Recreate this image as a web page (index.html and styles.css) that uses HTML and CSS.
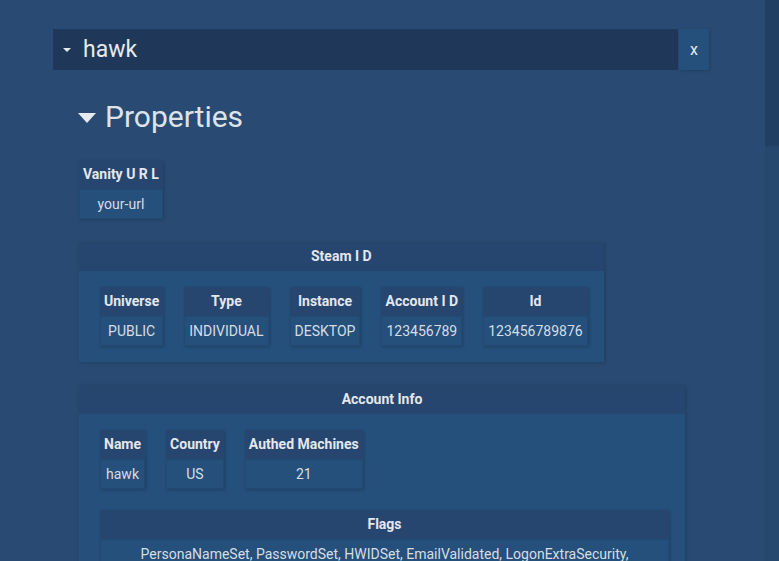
FILE: index.html
```html
<!DOCTYPE html>
<html lang="en">
<head>
<meta charset="utf-8">
<title>hawk</title>
<link rel="stylesheet" href="styles.css">
</head>
<body>
<div class="app">
  <main class="main">
    <div class="window">
      <div class="titlebar">
        <div class="title">
          <span class="tri-small"></span>
          <span class="title-text">hawk</span>
        </div>
        <div class="close">x</div>
      </div>
      <section class="props">
        <h2 class="props-h"><span class="tri-big"></span>Properties</h2>
        <div class="props-body">
          <div class="field">
            <div class="field-h">Vanity U R L</div>
            <div class="field-v">your-url</div>
          </div>

          <div class="group">
            <div class="group-h">Steam I D</div>
            <div class="group-b">
              <div class="field">
                <div class="field-h">Universe</div>
                <div class="field-v">PUBLIC</div>
              </div>
              <div class="field">
                <div class="field-h">Type</div>
                <div class="field-v">INDIVIDUAL</div>
              </div>
              <div class="field">
                <div class="field-h">Instance</div>
                <div class="field-v">DESKTOP</div>
              </div>
              <div class="field">
                <div class="field-h">Account I D</div>
                <div class="field-v">123456789</div>
              </div>
              <div class="field">
                <div class="field-h">Id</div>
                <div class="field-v">123456789876</div>
              </div>
            </div>
          </div>

          <div class="group">
            <div class="group-h">Account Info</div>
            <div class="group-b group-col">
              <div class="row">
                <div class="field">
                  <div class="field-h">Name</div>
                  <div class="field-v">hawk</div>
                </div>
                <div class="field">
                  <div class="field-h">Country</div>
                  <div class="field-v">US</div>
                </div>
                <div class="field">
                  <div class="field-h">Authed Machines</div>
                  <div class="field-v">21</div>
                </div>
              </div>
              <div class="field field-wide">
                <div class="field-h">Flags</div>
                <div class="field-v">PersonaNameSet, PasswordSet, HWIDSet, EmailValidated, LogonExtraSecurity, Steam2MigrationComplete, TwoFactorEnabled</div>
              </div>
            </div>
          </div>
        </div>
      </section>
    </div>
  </main>
  <div class="scrollbar">
    <div class="thumb"></div>
    <div class="track"></div>
  </div>
</div>
</body>
</html>
```

FILE: styles.css
```css
html, body {
  margin: 0;
  padding: 0;
  height: 100%;
}

body {
  background: #294b73;
  color: #dfe3e8;
  font-family: Roboto, "Liberation Sans", Arial, sans-serif;
  font-size: 14px;
  overflow: hidden;
}

.app {
  display: flex;
  height: 561px;
  overflow: hidden;
}

.main {
  flex: 1;
  padding: 29px 0 0 53px;
  min-width: 0;
}

.window {
  width: 656px;
}

.titlebar {
  display: flex;
  height: 41px;
}

.title {
  flex: 1;
  background: #1f3758;
  display: flex;
  align-items: center;
  padding-left: 10px;
}

.tri-small {
  width: 0;
  height: 0;
  border-left: 4px solid transparent;
  border-right: 4px solid transparent;
  border-top: 4px solid #e6e9ee;
  margin-top: 1px;
}

.title-text {
  margin-left: 12px;
  font-size: 23px;
  color: #e6e9ee;
  line-height: 28px;
}

.close {
  width: 30px;
  margin-left: 1px;
  background: #24507b;
  display: flex;
  align-items: center;
  justify-content: center;
  font-size: 16px;
  color: #e6e9ee;
  box-shadow: 1px 1px 3px rgba(0, 0, 0, 0.18);
}

.props {
  padding: 0 24px 0 25px;
}

.props-h {
  margin: 29px 0 0 0;
  font-size: 30px;
  font-weight: 400;
  line-height: 36px;
  color: #dde3ea;
  display: flex;
  align-items: center;
}

.tri-big {
  width: 0;
  height: 0;
  border-left: 9px solid transparent;
  border-right: 9px solid transparent;
  border-top: 10px solid #e6e9ee;
  margin-right: 9px;
  margin-top: 1px;
}

.props-body {
  margin-top: 25px;
  padding-left: 1px;
  display: flex;
  flex-direction: column;
  align-items: flex-start;
  gap: 23px;
}

.field {
  display: flex;
  flex-direction: column;
  box-shadow: 1px 1px 3px rgba(0, 0, 0, 0.2);
  text-align: center;
}

.field-h {
  background: #264670;
  font-weight: 700;
  line-height: 19px;
  padding: 5px 4px;
  color: #e4e7eb;
}

.field-v {
  background: #25507b;
  line-height: 20px;
  padding: 5px 5px;
  color: #d7dde4;
  box-shadow: inset 0 0 0 1px rgba(0, 0, 0, 0.07);
}

.group {
  box-shadow: 1px 1px 4px rgba(0, 0, 0, 0.2);
}

.group-h {
  background: #264670;
  font-weight: 700;
  text-align: center;
  line-height: 19px;
  padding: 5px 4px;
  color: #e4e7eb;
}

.group-b {
  background: #25507b;
  padding: 16px 16px 16px 21px;
  display: flex;
  gap: 21px;
}

.group-col {
  flex-direction: column;
  align-items: stretch;
}

.row {
  display: flex;
  gap: 21px;
  align-items: flex-start;
}

.field-wide .field-v {
  padding: 5px 12px;
}

.scrollbar {
  width: 14px;
  display: flex;
  flex-direction: column;
}

.thumb {
  height: 146px;
  background: #213f63;
}

.track {
  flex: 1;
  background: #26486f;
}
```
